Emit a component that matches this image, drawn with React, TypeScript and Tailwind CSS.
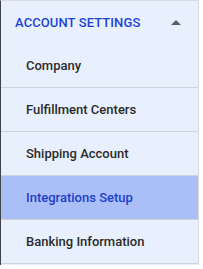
const items = [
  "Company",
  "Fulfillment Centers",
  "Shipping Account",
  "Integrations Setup",
  "Banking Information",
];

export default function App() {
  const active = "Integrations Setup";

  return (
    <div className="flex h-[269px] w-[203px] bg-white font-['Roboto',sans-serif]">
      <div className="flex h-[265px] w-[199px] flex-col border-t border-r border-l border-t-[#d9dce2] border-r-[#d6d9df] border-l-[#3f4246] bg-[#e8f0fe]">
        <div className="flex h-[43px] items-center justify-between pr-[17px] pl-[14px]">
          <span className="text-[13px] font-medium tracking-[0.1px] text-[#1d43d4]">ACCOUNT SETTINGS</span>
          <svg width="10" height="5" viewBox="0 0 10 5">
            <path d="M0 5 L5 0 L10 5 Z" fill="#5a5d63" />
          </svg>
        </div>
        {items.map((item) => (
          <div
            key={item}
            className={
              item === active
                ? "flex h-[44px] items-center border-b border-[#cfd3da] bg-[#aabef8] pl-[25px] text-[13px] font-medium text-[#1d3fc9]"
                : "flex h-[44px] items-center border-b border-[#cfd3da] pl-[25px] text-[13px] font-medium text-[#2b2b2b]"
            }
          >
            {item}
          </div>
        ))}
      </div>
    </div>
  );
}
